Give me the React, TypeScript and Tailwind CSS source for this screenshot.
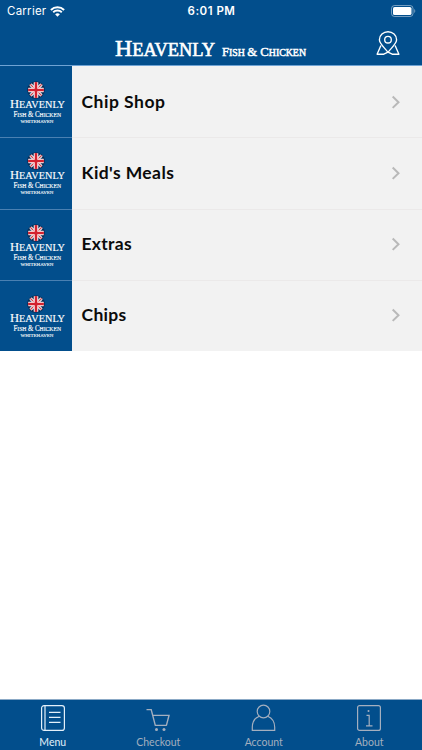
import type { ReactNode } from 'react'

interface MenuItem {
  name: string
  label: string
}

const items: MenuItem[] = [
  { name: 'Chip Shop', label: 'tracking-[0.5px]' },
  { name: "Kid's Meals", label: 'tracking-[0.4px]' },
  { name: 'Extras', label: 'tracking-[0.3px]' },
  { name: 'Chips', label: 'tracking-[0.3px]' },
]

function StatusBar() {
  return (
    <div className="grid h-[22px] grid-cols-3 items-center pl-[7px] pr-[6px] font-['Inter',sans-serif] text-[11.5px] leading-none">
      <div className="flex items-center gap-[4px]">
        <span className="pt-px tracking-[0.25px]">Carrier</span>
        <svg width="15" height="11" viewBox="0 0 15 11" fill="none" stroke="currentColor">
          <path d="M0.9 3.9a9.6 9.6 0 0 1 13.2 0" strokeWidth="2" />
          <path d="M3.2 6.3a6.2 6.2 0 0 1 8.6 0" strokeWidth="1.9" />
          <path d="M7.5 10.7 5.1 8.3a3.5 3.5 0 0 1 4.8 0z" fill="currentColor" stroke="none" />
        </svg>
      </div>
      <span className="pt-px text-center font-semibold tracking-[0.5px]">6:01 PM</span>
      <svg className="justify-self-end" width="25" height="12" viewBox="0 0 25 12">
        <rect x="0.5" y="0.5" width="21.5" height="11" rx="3" fill="none" stroke="#fff" strokeOpacity="0.45" />
        <rect x="2" y="2" width="18.5" height="8" rx="1.6" fill="#fff" />
        <path d="M23.3 4v4c1.3-.6 1.3-3.4 0-4z" fill="#fff" fillOpacity="0.5" />
      </svg>
    </div>
  )
}

function HeaderLogo() {
  return (
    <svg
      width="194"
      height="32"
      viewBox="0 0 194 32"
      fill="#fff"
      stroke="#fff"
      className="font-['Liberation_Serif',serif]"
    >
      <text x="1" y="25.7" fontSize="24" textLength="100" lengthAdjust="spacingAndGlyphs" strokeWidth="0.6">
        H<tspan fontSize="18.5">EAVENLY</tspan>
      </text>
      <text x="108" y="25.7" fontSize="13.5" textLength="84" lengthAdjust="spacingAndGlyphs" strokeWidth="0.5">
        F<tspan fontSize="10.5">ISH </tspan>&amp; C<tspan fontSize="10.5">HICKEN</tspan>
      </text>
    </svg>
  )
}

function MapPinIcon() {
  return (
    <svg width="24" height="25" viewBox="0 0 24 25" fill="none" stroke="currentColor" strokeWidth="1.35" strokeLinejoin="round">
      <path d="M12 21.3C8.3 16.4 3.4 12.6 3.4 8.7a8.6 8 0 0 1 17.2 0C20.6 12.6 15.7 16.4 12 21.3z" />
      <circle cx="12" cy="8.7" r="3.3" />
      <path d="M4.9 14.5 1.1 23.2H7.8L12 21.1l4.2 2.1h6.7l-3.8-8.7" />
    </svg>
  )
}

function ItemLogo() {
  return (
    <svg width="71" height="70" viewBox="0 0 71 70" fill="#fff" stroke="#fff" className="font-['Liberation_Serif',serif]">
      <clipPath id="badge">
        <circle cx="36" cy="24" r="8" />
      </clipPath>
      <circle cx="36" cy="24" r="8.8" fill="#0c2c55" stroke="none" />
      <g clipPath="url(#badge)" fill="none">
        <path d="M27 15l18 18M45 15l-18 18" stroke="#e9edf3" strokeWidth="3.2" />
        <path d="M27 15l18 18M45 15l-18 18" stroke="#d23a42" strokeWidth="1.1" />
        <path d="M36 14.5v19M27 24h18" stroke="#fff" strokeWidth="4.6" />
        <path d="M36 14.5v19M27 24h18" stroke="#d3222f" strokeWidth="2.6" />
      </g>
      <text x="10" y="42.4" fontSize="13" textLength="55" lengthAdjust="spacingAndGlyphs" strokeWidth="0.15">
        H<tspan fontSize="10.6">EAVENLY</tspan>
      </text>
      <text x="13.5" y="50.6" fontSize="8" textLength="47.5" lengthAdjust="spacingAndGlyphs" strokeWidth="0.15">
        F<tspan fontSize="6.6">ISH </tspan>&amp; C<tspan fontSize="6.6">HICKEN</tspan>
      </text>
      <text x="20.5" y="57" fontSize="5" textLength="33" lengthAdjust="spacingAndGlyphs" strokeWidth="0.1">WHITEHAVEN</text>
    </svg>
  )
}

function MenuRow({ item }: { item: MenuItem }) {
  return (
    <li className="group flex h-[71.25px] bg-[#f2f2f2]">
      <div className="w-[71.5px] border-t border-[#4a80b2] bg-[#024e8c] group-first:border-[#024e8c]">
        <div className="-mt-px">
          <ItemLogo />
        </div>
      </div>
      <div className="flex flex-1 items-center justify-between border-t border-[#ebe9e9] pb-px pl-[10px] pr-[21px] group-first:border-[#f2f2f2]">
        <span className={`font-['Lato',sans-serif] text-[17.5px] font-bold leading-6 text-[#0b0b0b] ${item.label}`}>
          {item.name}
        </span>
        <svg width="10" height="14" viewBox="0 0 10 14" fill="none" stroke="#b9b9b9" strokeWidth="2">
          <path d="M1.7 1.5 7.5 7.2 1.7 12.9" />
        </svg>
      </div>
    </li>
  )
}

function Tab({ label, active = false, children }: { label: string; active?: boolean; children: ReactNode }) {
  return (
    <div className={`flex flex-1 flex-col items-center ${active ? 'text-[#e4f0fa]' : 'text-[#a4afbf]'}`}>
      <svg className="mt-[4px]" width="28" height="30" viewBox="0 0 28 30" fill="none" stroke="currentColor" strokeWidth="1.2">
        {children}
      </svg>
      <span className="mt-[2px] font-['Lato',sans-serif] text-[10.5px] leading-[13px]">{label}</span>
    </div>
  )
}

export default function App() {
  return (
    <div className="flex h-screen flex-col bg-white">
      <header className="h-[66px] border-b border-[#6fa3d4] bg-[#024e8c] text-white">
        <StatusBar />
        <div className="grid h-[43px] grid-cols-[114px_1fr_46px] items-center">
          <div className="col-start-2 pt-[4px]">
            <HeaderLogo />
          </div>
          <MapPinIcon />
        </div>
      </header>

      <main className="flex-1">
        <ul>
          {items.map((item) => (
            <MenuRow key={item.name} item={item} />
          ))}
        </ul>
      </main>

      <nav className="flex h-[51px] border-t border-[#8ba9c6] bg-[#024e8c]">
        <Tab label="Menu" active>
          <rect x="2.6" y="1.6" width="22.8" height="24.8" rx="2.5" />
          <path d="M6 1.6v24.8M10 8.4h11.5M10 13.4h11.5M10 18.4h11.5" />
        </Tab>
        <Tab label="Checkout">
          <path d="M2.5 5.6h4.7l4.1 15.8h11.5M8.7 11.4h16.3l-2.6 10" strokeWidth="1.4" />
          <circle cx="12.5" cy="25.4" r="1.5" fill="currentColor" stroke="none" />
          <circle cx="20" cy="25.4" r="1.5" fill="currentColor" stroke="none" />
        </Tab>
        <Tab label="Account">
          <circle cx="13.5" cy="7.5" r="6.3" />
          <path d="M9.3 12.2C4.8 14 2.3 18 2.3 23.3v3h22.4v-3c0-5.3-2.5-9.3-7-11.1" />
        </Tab>
        <Tab label="About">
          <rect x="2.6" y="1.6" width="22.8" height="24.8" rx="2" />
          <path d="M11.5 11.3h2.7v10.5M11 21.8h6.5" />
          <circle cx="13.5" cy="7" r="1" fill="currentColor" stroke="none" />
        </Tab>
      </nav>
    </div>
  )
}
